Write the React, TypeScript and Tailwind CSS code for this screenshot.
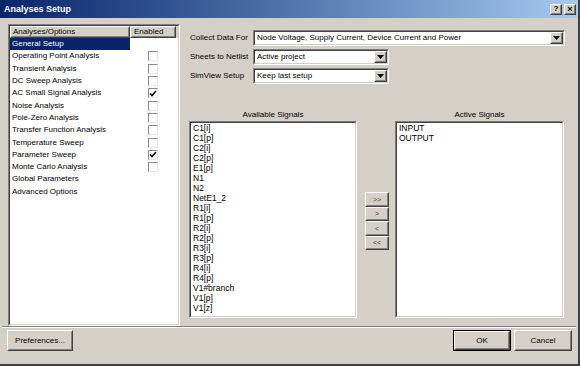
import { ReactNode } from "react"

const font = { fontFamily: '"Liberation Sans", Arial, sans-serif' }

const analyses: [string, boolean | null][] = [
    ["General Setup", null],
    ["Operating Point Analysis", false],
    ["Transient Analysis", false],
    ["DC Sweep Analysis", false],
    ["AC Small Signal Analysis", true],
    ["Noise Analysis", false],
    ["Pole-Zero Analysis", false],
    ["Transfer Function Analysis", false],
    ["Temperature Sweep", false],
    ["Parameter Sweep", true],
    ["Monte Carlo Analysis", false],
    ["Global Parameters", null],
    ["Advanced Options", null],
]

const available = [
    "C1[i]", "C1[p]", "C2[i]", "C2[p]", "E1[p]", "N1", "N2", "NetE1_2", "R1[i]", "R1[p]",
    "R2[i]", "R2[p]", "R3[i]", "R3[p]", "R4[i]", "R4[p]", "V1#branch", "V1[p]", "V1[z]",
]

function Sunken({ className, children }: { className?: string, children?: ReactNode }) {
    return (
        <div className={`border border-t-[#808080] border-l-[#808080] border-b-white border-r-white ${className ?? ""}`}>
            <div className="h-full w-full border border-t-[#404040] border-l-[#404040] border-b-[#d4d0c8] border-r-[#d4d0c8] bg-white overflow-hidden">
                {children}
            </div>
        </div>
    )
}

function Raised({ className, children }: { className?: string, children?: ReactNode }) {
    return (
        <div className={`border border-t-white border-l-white border-b-[#404040] border-r-[#404040] ${className ?? ""}`}>
            <div className="h-full w-full border border-t-[#d4d0c8] border-l-[#d4d0c8] border-b-[#808080] border-r-[#808080] bg-[#d4d0c8] flex items-center justify-center">
                {children}
            </div>
        </div>
    )
}

function Combo({ value, width }: { value: string, width: string }) {
    return (
        <Sunken className={`${width} h-[16px]`}>
            <div className="flex h-full items-center">
                <span className="flex-1 pl-[2px] text-[8px] leading-none text-black whitespace-nowrap">{value}</span>
                <Raised className="w-[13px] h-full">
                    <svg width="7" height="4" viewBox="0 0 7 4"><path d="M0 0h7L3.5 4z" fill="#000" /></svg>
                </Raised>
            </div>
        </Sunken>
    )
}

function CheckBox({ checked }: { checked: boolean }) {
    return (
        <div className="w-[10px] h-[10px] border border-t-[#8a8a8a] border-l-[#8a8a8a] border-b-[#e6e6e6] border-r-[#e6e6e6] bg-white flex items-center justify-center">
            {checked && (
                <svg width="8" height="7" viewBox="0 0 8 7"><path d="M1 3.5l2 2L7 1" stroke="#000" strokeWidth="1.6" fill="none" /></svg>
            )}
        </div>
    )
}

export default function App() {
    return (
        <div style={font} className="w-[580px] h-[366px] bg-[#d4d0c8] flex flex-col border-r-2 border-b-2 border-r-[#404040] border-b-[#404040] overflow-hidden">
            <div className="h-[18px] shrink-0 bg-gradient-to-r from-[#0a246a] to-[#a6caf0] flex items-center justify-between pl-[4px] pr-[2px]">
                <span className="text-white font-bold text-[9px] leading-none mt-[1px]">Analyses Setup</span>
                <div className="flex gap-[2px]">
                    <Raised className="w-[12px] h-[11px]"><span className="text-[8px] font-bold leading-none">?</span></Raised>
                    <Raised className="w-[12px] h-[11px]"><span className="text-[9px] font-bold leading-none">×</span></Raised>
                </div>
            </div>

            <div className="flex pl-[8px] pt-[6px] h-[308px] shrink-0">
                <Sunken className="w-[172px] h-[302px]">
                    <div className="flex h-[12px]">
                        <Raised className="w-[120px] h-full">
                            <span className="w-full pl-[1px] text-[8px] leading-none text-black">Analyses/Options</span>
                        </Raised>
                        <Raised className="w-[46px] h-full">
                            <span className="w-full pl-[2px] text-[8px] leading-none text-black">Enabled</span>
                        </Raised>
                        <div className="flex-1 bg-[#d4d0c8]" />
                    </div>
                    {analyses.map(([name, enabled], i) => (
                        <div key={name} className="flex h-[12.3px] items-center">
                            <div className={`w-[120px] h-full flex items-center pl-[2px] text-[8px] leading-none ${i === 0 ? "bg-[#0a246a] text-white" : "text-black"}`}>
                                {name}
                            </div>
                            <div className="w-[46px] flex justify-center">
                                {enabled !== null && <CheckBox checked={enabled} />}
                            </div>
                        </div>
                    ))}
                </Sunken>

                <div className="ml-[9px] flex flex-col">
                    <div className="flex flex-col gap-[3px] mt-[6px]">
                        <div className="flex items-center">
                            <span className="w-[64px] pl-[1px] text-[8px] text-black">Collect Data For</span>
                            <Combo value="Node Voltage, Supply Current, Device Current and Power" width="w-[312px]" />
                        </div>
                        <div className="flex items-center">
                            <span className="w-[64px] pl-[1px] text-[8px] text-black">Sheets to Netlist</span>
                            <Combo value="Active project" width="w-[136px]" />
                        </div>
                        <div className="flex items-center">
                            <span className="w-[64px] pl-[1px] text-[8px] text-black">SimView Setup</span>
                            <Combo value="Keep last setup" width="w-[136px]" />
                        </div>
                    </div>

                    <div className="flex mt-[25px]">
                        <div className="flex flex-col w-[168px]">
                            <span className="h-[12px] text-center text-[8px] leading-[12px] text-black">Available Signals</span>
                            <Sunken className="h-[197px]">
                                {available.map((s) => (
                                    <div key={s} className="pl-[2px] text-[8.5px] leading-[10px] text-black">{s}</div>
                                ))}
                            </Sunken>
                        </div>
                        <div className="ml-[8px] mt-[83px] flex flex-col">
                            {[">>", ">", "<", "<<"].map((b) => (
                                <Raised key={b} className="w-[24px] h-[14.5px]">
                                    <span className="text-[7px] leading-none text-[#444]">{b}</span>
                                </Raised>
                            ))}
                        </div>
                        <div className="ml-[6px] flex flex-col w-[169px]">
                            <span className="h-[12px] text-center text-[8px] leading-[12px] text-black">Active Signals</span>
                            <Sunken className="h-[197px]">
                                {["INPUT", "OUTPUT"].map((s) => (
                                    <div key={s} className="pl-[2px] text-[8.5px] leading-[10px] text-black">{s}</div>
                                ))}
                            </Sunken>
                        </div>
                    </div>
                </div>
            </div>

            <div className="mx-[2px] border-t border-t-[#808080] border-b border-b-white" />

            <div className="flex items-start justify-between pl-[7px] pr-[6px] pt-[2px]">
                <Raised className="w-[66px] h-[21px]">
                    <span className="text-[8px] text-black">Preferences...</span>
                </Raised>
                <div className="flex gap-[3px]">
                    <div className="border border-black">
                        <Raised className="w-[56px] h-[19px]">
                            <span className="text-[8px] text-black">OK</span>
                        </Raised>
                    </div>
                    <Raised className="w-[58px] h-[21px]">
                        <span className="text-[8px] text-black">Cancel</span>
                    </Raised>
                </div>
            </div>
        </div>
    )
}
